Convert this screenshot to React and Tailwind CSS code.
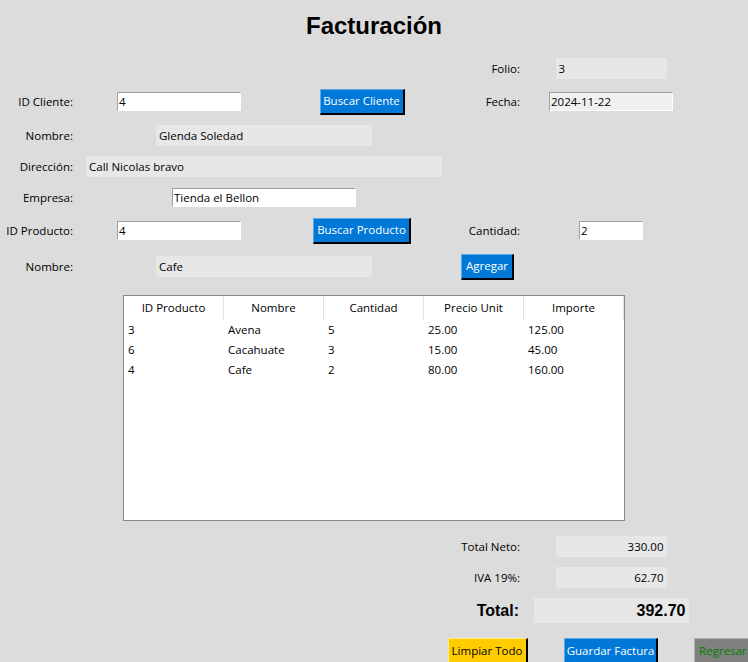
import React from 'react';

const ui = { fontFamily: '"Segoe UI", "Open Sans", "Noto Sans", sans-serif' };
const arial = { fontFamily: '"Liberation Sans", Arial, sans-serif' };

const productos = [
  { id: '3', nombre: 'Avena', cantidad: '5', precio: '25.00', importe: '125.00' },
  { id: '6', nombre: 'Cacahuate', cantidad: '3', precio: '15.00', importe: '45.00' },
  { id: '4', nombre: 'Cafe', cantidad: '2', precio: '80.00', importe: '160.00' },
];

const columnas = ['ID Producto', 'Nombre', 'Cantidad', 'Precio Unit', 'Importe'];

const Label = ({ children, className = '' }) => (
  <span className={`self-center justify-self-end mr-[8px] mt-[1px] text-[11.5px] text-black whitespace-nowrap ${className}`}>
    {children}
  </span>
);

const Entry = ({ value, className = '', bg = 'bg-white' }) => (
  <div
    className={`self-center justify-self-center h-[19px] ${bg} border border-t-[#a0a0a0] border-l-[#a0a0a0] border-b-white border-r-white text-[11.5px] leading-[17px] pl-[1px] text-black whitespace-nowrap overflow-hidden ${className}`}
  >
    {value}
  </div>
);

const Box = ({ value, className = '' }) => (
  <div className={`self-center justify-self-center h-[21px] bg-[#e7e7e7] px-[3px] text-[11.5px] leading-[21px] text-black whitespace-nowrap ${className}`}>
    {value}
  </div>
);

const Boton = ({ children, className = '' }) => (
  <button
    className={`justify-self-center h-[26px] border-t border-l border-b-2 border-r-2 border-b-black border-r-black text-[11.5px] leading-none whitespace-nowrap ${className}`}
  >
    {children}
  </button>
);

export default function App() {
  return (
    <div
      style={ui}
      className="w-[748px] h-[662px] overflow-hidden bg-[#dcdcdc] grid grid-cols-[81px_196px_170px_81px_166px_54px] grid-rows-[50px_34px_35px_33px_29px_33px_33px_39px_244px_33px_29px_37px_33px]"
    >
      <h1 style={arial} className="col-span-6 self-center justify-self-center text-[24px] font-bold text-black leading-none mt-[2px]">
        Facturación
      </h1>

      {/* Folio */}
      <div className="col-span-3" />
      <Label className="mt-[3px]">Folio:</Label>
      <Box value="3" className="w-[111px] mt-[2px]" />
      <div />

      {/* Cliente */}
      <Label>ID Cliente:</Label>
      <Entry value="4" className="w-[124px]" />
      <Boton className="self-center w-[85px] h-[25px] bg-[#0078d7] border-t-[#5aa8ec] border-l-[#5aa8ec] text-white">Buscar Cliente</Boton>
      <Label>Fecha:</Label>
      <Entry value="2024-11-22" bg="bg-[#f0f0f0]" className="w-[124px]" />
      <div />

      <Label>Nombre:</Label>
      <Box value="Glenda Soledad" className="col-span-2 w-[216px]" />
      <div className="col-span-3" />

      <Label>Dirección:</Label>
      <Box value="Call Nicolas bravo" className="col-span-2 w-[356px]" />
      <div className="col-span-3" />

      <Label>Empresa:</Label>
      <Entry value="Tienda el Bellon" className="col-span-2 w-[184px]" />
      <div className="col-span-3" />

      {/* Producto */}
      <Label>ID Producto:</Label>
      <Entry value="4" className="w-[124px]" />
      <Boton className="self-center w-[98px] h-[25px] bg-[#0078d7] border-t-[#5aa8ec] border-l-[#5aa8ec] text-white">Buscar Producto</Boton>
      <Label>Cantidad:</Label>
      <Entry value="2" className="w-[64px]" />
      <div />

      <Label>Nombre:</Label>
      <Box value="Cafe" className="col-span-2 w-[216px]" />
      <Boton className="self-center w-[53px] bg-[#0078d7] border-t-[#5aa8ec] border-l-[#5aa8ec] text-white">Agregar</Boton>
      <div className="col-span-2" />

      {/* Tabla */}
      <div className="col-span-6 self-start justify-self-center mt-[9px] w-[502px] h-[226px] bg-white border border-[#828790] text-[11.5px] text-black">
        <div className="flex h-[24px]">
          {columnas.map((c) => (
            <div key={c} className="w-[100px] h-full flex items-center justify-center border-r border-[#e5e5e5]">
              {c}
            </div>
          ))}
        </div>
        {productos.map((p) => (
          <div key={p.id} className="flex h-[20px] items-center">
            <div className="w-[100px] pl-[4px]">{p.id}</div>
            <div className="w-[100px] pl-[4px]">{p.nombre}</div>
            <div className="w-[100px] pl-[4px]">{p.cantidad}</div>
            <div className="w-[100px] pl-[4px]">{p.precio}</div>
            <div className="w-[100px] pl-[4px]">{p.importe}</div>
          </div>
        ))}
      </div>

      {/* Totales */}
      <div className="col-span-3" />
      <Label>Total Neto:</Label>
      <Box value="330.00" className="w-[111px] text-right" />
      <div />

      <div className="col-span-3" />
      <Label>IVA 19%:</Label>
      <Box value="62.70" className="w-[111px] text-right" />
      <div />

      <div className="col-span-3" />
      <span style={arial} className="self-center justify-self-end mr-[9px] text-[16px] font-bold text-black">
        Total:
      </span>
      <div
        style={arial}
        className="self-center justify-self-center w-[155px] h-[25px] bg-[#e7e7e7] px-[3px] text-right text-[16px] font-bold leading-[25px] text-black"
      >
        392.70
      </div>
      <div />

      {/* Botones */}
      <div className="col-span-3" />
      <Boton className="self-start mt-[9px] w-[80px] bg-[#ffcc00] border-t-[#ffee80] border-l-[#ffee80] text-black">Limpiar Todo</Boton>
      <Boton className="self-start mt-[9px] w-[94px] bg-[#0078d7] border-t-[#5aa8ec] border-l-[#5aa8ec] text-white">Guardar Factura</Boton>
      <Boton className="self-start justify-self-start mt-[9px] w-[60px] pl-[4px] text-left bg-[#808080] border-t-[#b0b0b0] border-l-[#b0b0b0] text-[#008000]">Regresar</Boton>
    </div>
  );
}
